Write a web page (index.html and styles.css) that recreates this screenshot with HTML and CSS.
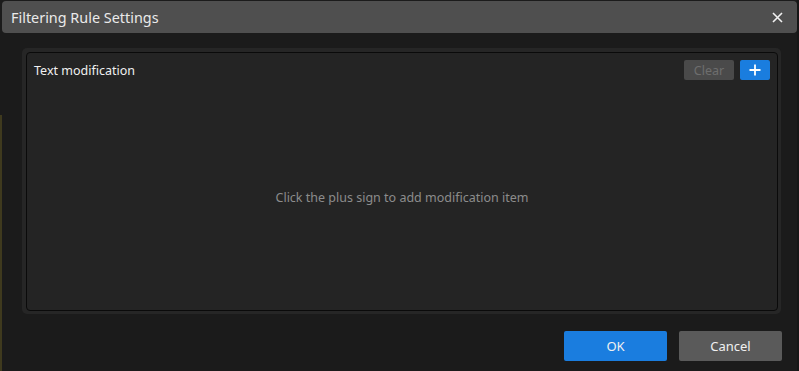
FILE: index.html
```html
<!DOCTYPE html>
<html lang="en">
<head>
  <meta charset="UTF-8">
  <title>Filtering Rule Settings</title>
  <link rel="stylesheet" href="styles.css">
</head>
<body>
  <div class="dialog">
    <div class="titlebar">
      <span class="title">Filtering Rule Settings</span>
      <span class="close">
        <svg width="11" height="11" viewBox="0 0 11 11"><path d="M1 1L10 10M10 1L1 10" stroke="#f0f0f0" stroke-width="1.6"/></svg>
      </span>
    </div>

    <div class="content">
      <div class="panel">
        <div class="inner">
          <div class="panel-head">
            <span class="panel-title">Text modification</span>
            <div class="tools">
              <div class="btn-clear">Clear</div>
              <div class="btn-add">
                <svg width="12" height="12" viewBox="0 0 12 12"><path d="M6 0.5V11.5M0.5 6H11.5" stroke="#fff" stroke-width="1.8"/></svg>
              </div>
            </div>
          </div>
          <div class="empty">Click the plus sign to add modification item</div>
        </div>
      </div>
    </div>

    <div class="footer">
      <div class="btn btn-ok">OK</div>
      <div class="btn btn-cancel">Cancel</div>
    </div>
  </div>
</body>
</html>
```

FILE: styles.css
```css
* { margin: 0; padding: 0; box-sizing: border-box; }
html, body {
  height: 100%;
}
body {
  font-family: "Noto Sans", "Noto Sans CJK SC", sans-serif;
  background-color: #161616;
  background-image: linear-gradient(#1b1b1b 0 115px, #3f3a1e 115px);
  background-size: 2px 100%;
  background-repeat: no-repeat;
  color: #e6e6e6;
  overflow: hidden;
}
.dialog {
  margin-left: 2px;
  width: 795px;
  height: 371px;
  background: #1b1b1b;
  display: flex;
  flex-direction: column;
}
.titlebar {
  margin-top: 1px;
  height: 32px;
  background: #4f4f4f;
  border-radius: 4px;
  display: flex;
  align-items: center;
  justify-content: space-between;
  padding: 0 14px 0 9px;
}
.title {
  font-size: 14.4px;
  color: #eaeaea;
}
.close {
  display: flex;
}
.content {
  padding: 15px 16px 0 20px;
}
.panel {
  background: #262626;
  border-radius: 5px;
  padding: 4px 3px 3px 4px;
  height: 266px;
}
.inner {
  height: 100%;
  background: #242424;
  border: 1px solid #0a0a0a;
  border-radius: 4px;
  display: flex;
  flex-direction: column;
}
.panel-head {
  display: flex;
  justify-content: space-between;
  align-items: center;
  padding: 7px 7px 0 7px;
}
.panel-title {
  font-size: 12.5px;
  color: #f0f0f0;
}
.tools {
  display: flex;
  gap: 6px;
}
.btn-clear {
  width: 50px;
  height: 20px;
  background: #4a4a4a;
  color: #6e6e6e;
  font-size: 12.5px;
  border-radius: 2px;
  display: flex;
  align-items: center;
  justify-content: center;
}
.btn-add {
  width: 30px;
  height: 20px;
  background: #1a7ddf;
  border-radius: 2px;
  display: flex;
  align-items: center;
  justify-content: center;
}
.empty {
  flex: 1;
  display: flex;
  align-items: center;
  justify-content: center;
  padding-top: 4px;
  font-size: 12.5px;
  color: #8c8c8c;
}
.footer {
  display: flex;
  justify-content: flex-end;
  gap: 12px;
  padding: 17px 15px 0 0;
}
.btn {
  width: 103px;
  height: 30px;
  border-radius: 2px;
  display: flex;
  align-items: center;
  justify-content: center;
  font-size: 13px;
  color: #f0f0f0;
}
.btn-ok {
  background: #1a7ddf;
}
.btn-cancel {
  background: #5a5a5a;
}
```
